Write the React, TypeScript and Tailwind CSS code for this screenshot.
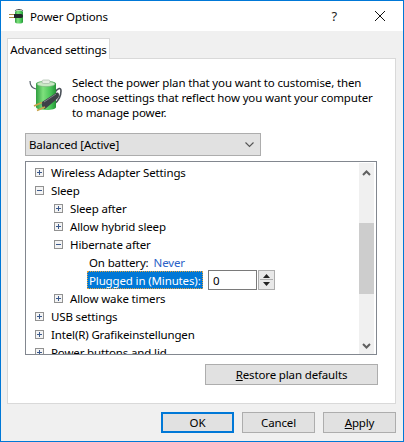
import React from 'react';

const ExpandBox: React.FC<{ open?: boolean }> = ({ open }) => (
  <svg width="9" height="9" viewBox="0 0 9 9" className="shrink-0">
    <rect x="0.5" y="0.5" width="8" height="8" fill="#f4f4f4" stroke="#919191" />
    <path d={open ? 'M2 4.5h5' : 'M2 4.5h5M4.5 2v5'} stroke="#3c5a8c" strokeWidth="1" />
  </svg>
);

const GreenGradient: React.FC<{ id: string }> = ({ id }) => (
  <defs>
    <linearGradient id={id} x1="0" x2="1" y1="0" y2="0">
      <stop offset="0" stopColor="#2f9e3f" />
      <stop offset="0.35" stopColor="#7fe07d" />
      <stop offset="0.75" stopColor="#45c455" />
      <stop offset="1" stopColor="#259238" />
    </linearGradient>
  </defs>
);

const LargeBattery: React.FC = () => (
  <svg width="34" height="34" viewBox="0 0 34 34" className="shrink-0">
    <GreenGradient id="large-battery" />
    <path d="M2 3c0 4 2 7 6 8" fill="none" stroke="#56606a" strokeWidth="1.2" />
    <path d="M27 14c3-4 6-5 6-1s-2 10-7 13" fill="none" stroke="#4a5058" strokeWidth="1.6" />
    <path d="M8 6c0-2 4-3 10-3s10 1 10 3v23c0 2-4 3-10 3s-10-1-10-3z" fill="url(#large-battery)" />
    <ellipse cx="18" cy="6" rx="9" ry="2.6" fill="#c9e8c4" stroke="#7fb183" strokeWidth="0.6" />
    <rect x="14" y="2" width="8" height="3.5" rx="1.5" fill="#e6eee3" stroke="#9cb09c" strokeWidth="0.6" />
    <path d="M14 24L28 15c2-1 3 0 3 2s-1 3-2 4L17 31c-2 0-4-4-3-7z" fill="#3d4247" />
    <path d="M16 24l12-8" stroke="#80858a" strokeWidth="1" />
    <path d="M14 24.5L6 28M17 29L9 32.5" stroke="#c7a24a" strokeWidth="1.8" />
  </svg>
);

const SmallBattery: React.FC = () => (
  <svg width="16" height="16" viewBox="0 0 16 16" className="shrink-0">
    <GreenGradient id="small-battery" />
    <path d="M6 3C7 1 13 1 14 3" fill="none" stroke="#4a5058" strokeWidth="1" />
    <path d="M6 4c0-1 2-1.500 4-1.500s4 .5 4 1.500v10c0 1-2 1.500-4 1.500s-4-.5-4-1.500z" fill="url(#small-battery)" />
    <path d="M5 6h7c1.500 0 2 1 2 2s-.5 2-2 2H5z" fill="#23272b" />
    <path d="M0 6.500h5M0 9.500h5" stroke="#a98a45" strokeWidth="1.200" />
  </svg>
);

const TreeRow: React.FC<{ indent: string; label: string; open?: boolean }> = ({ indent, label, open }) => (
  <div className={`flex items-center h-[18px] ${indent}`}>
    <ExpandBox open={open} />
    <span className="ml-[7px] whitespace-nowrap">{label}</span>
  </div>
);

const DialogButton: React.FC<{ width: string; children: React.ReactNode; primary?: boolean }> = ({ width, children, primary }) => (
  <button
    className={`${width} h-[21px] flex items-center justify-center bg-[#e1e1e1] ${
      primary ? 'border-2 border-[#0078d7]' : 'border border-[#adadad]'
    }`}
  >
    {children}
  </button>
);

const App: React.FC = () => {
  return (
    <div className="w-[404px] h-[442px] flex flex-col overflow-hidden bg-[#f0f0f0] border border-[#0078d7] font-['Noto_Sans',sans-serif] text-[11.5px] leading-[15px] tracking-[-0.14px] text-black">
      <header className="h-[30px] bg-white flex items-center shrink-0 pl-[8px]">
        <SmallBattery />
        <span className="ml-[5px]">Power Options</span>
        <span className="ml-auto mr-[38px] text-[13px] text-[#222]">?</span>
        <svg width="10" height="10" viewBox="0 0 10 10" className="mr-[18px]">
          <path d="M0 0l10 10M10 0L0 10" stroke="#111" strokeWidth="1" />
        </svg>
      </header>

      <main className="flex-1 pl-[6px] pr-[7px] pt-[7px] flex flex-col">
        <div className="w-[103px] h-[21px] bg-white border border-b-0 border-[#d9d9d9] flex items-center justify-center relative z-10 -mb-px whitespace-nowrap">
          Advanced settings
        </div>

        <section className="w-[389px] h-[346px] bg-white border border-[#d9d9d9] pl-[17px] flex flex-col">
          <div className="flex mt-[16px] h-[45px]">
            <div className="w-[47px] pl-[3px] pt-[3px]">
              <LargeBattery />
            </div>
            <p className="w-[320px] whitespace-nowrap">
              Select the power plan that you want to customise, then
              <br />
              choose settings that reflect how you want your computer
              <br />
              to manage power.
            </p>
          </div>

          <div className="mt-[13px] w-[236px] h-[23px] bg-[#e1e1e1] border border-[#adadad] flex items-center pl-[3px] pr-[6px] justify-between">
            <span>Balanced [Active]</span>
            <svg width="9" height="6" viewBox="0 0 9 6">
              <path d="M0.5 0.5L4.5 4.5L8.5 0.5" fill="none" stroke="#555" strokeWidth="1.1" />
            </svg>
          </div>

          <div className="mt-[5px] w-[352px] h-[194px] border border-[#82878f] flex overflow-hidden pt-px pr-[2px]">
            <div className="flex-1 pl-[9px] overflow-hidden">
              <TreeRow indent="" label="Wireless Adapter Settings" />
              <TreeRow indent="" label="Sleep" open />
              <TreeRow indent="pl-[19px]" label="Sleep after" />
              <TreeRow indent="pl-[19px]" label="Allow hybrid sleep" />
              <TreeRow indent="pl-[19px]" label="Hibernate after" open />
              <div className="flex items-center h-[18px] pl-[54px] whitespace-nowrap">
                <span>On battery:</span>
                <span className="ml-[5px] text-[#2a62c8]">Never</span>
              </div>
              <div className="flex items-center h-[20px] -my-px pl-[52px]">
                <span className="w-[116px] h-[18px] flex items-center pl-[1px] bg-[#0078d7] text-white border border-dotted border-[#e8a33a] whitespace-nowrap">
                  Plugged in (Minutes):
                </span>
                <div className="ml-[5px] w-[49px] h-[20px] border border-[#7a7a7a] flex items-center pl-[4px]">0</div>
                <div className="ml-px w-[17px] h-[20px] border border-[#adadad] bg-[#e8e8e8] flex flex-col items-center justify-around py-[2px]">
                  <svg width="7" height="4" viewBox="0 0 7 4"><path d="M3.5 0L7 4H0z" fill="#222" /></svg>
                  <div className="w-[13px] h-px bg-[#adadad]" />
                  <svg width="7" height="4" viewBox="0 0 7 4"><path d="M0 0h7L3.5 4z" fill="#222" /></svg>
                </div>
              </div>
              <TreeRow indent="pl-[19px]" label="Allow wake timers" />
              <TreeRow indent="" label="USB settings" />
              <TreeRow indent="" label="Intel(R) Grafikeinstellungen" />
              <TreeRow indent="" label="Power buttons and lid" />
            </div>

            <div className="w-[15px] h-[191px] bg-[#f0f0f0] flex flex-col shrink-0">
              <div className="h-[60px] flex justify-center pt-[7px]">
                <svg width="9" height="6" viewBox="0 0 9 6">
                  <path d="M1 5l3.5-3.5L8 5" fill="none" stroke="#606060" strokeWidth="2" />
                </svg>
              </div>
              <div className="h-[71px] bg-[#cdcdcd]" />
              <div className="flex-1 flex justify-center items-end pb-[5px]">
                <svg width="9" height="6" viewBox="0 0 9 6">
                  <path d="M1 1l3.5 3.5L8 1" fill="none" stroke="#606060" strokeWidth="2" />
                </svg>
              </div>
            </div>
          </div>

          <div className="mt-[9px] ml-[180px]">
            <DialogButton width="w-[173px]">
              <span><u>R</u>estore plan defaults</span>
            </DialogButton>
          </div>
        </section>

        <footer className="mt-[8px] flex gap-[8px] pl-[154px]">
          <DialogButton width="w-[73px]" primary>OK</DialogButton>
          <DialogButton width="w-[73px]">Cancel</DialogButton>
          <DialogButton width="w-[73px]"><span><u>A</u>pply</span></DialogButton>
        </footer>
      </main>
    </div>
  );
};

export default App;
